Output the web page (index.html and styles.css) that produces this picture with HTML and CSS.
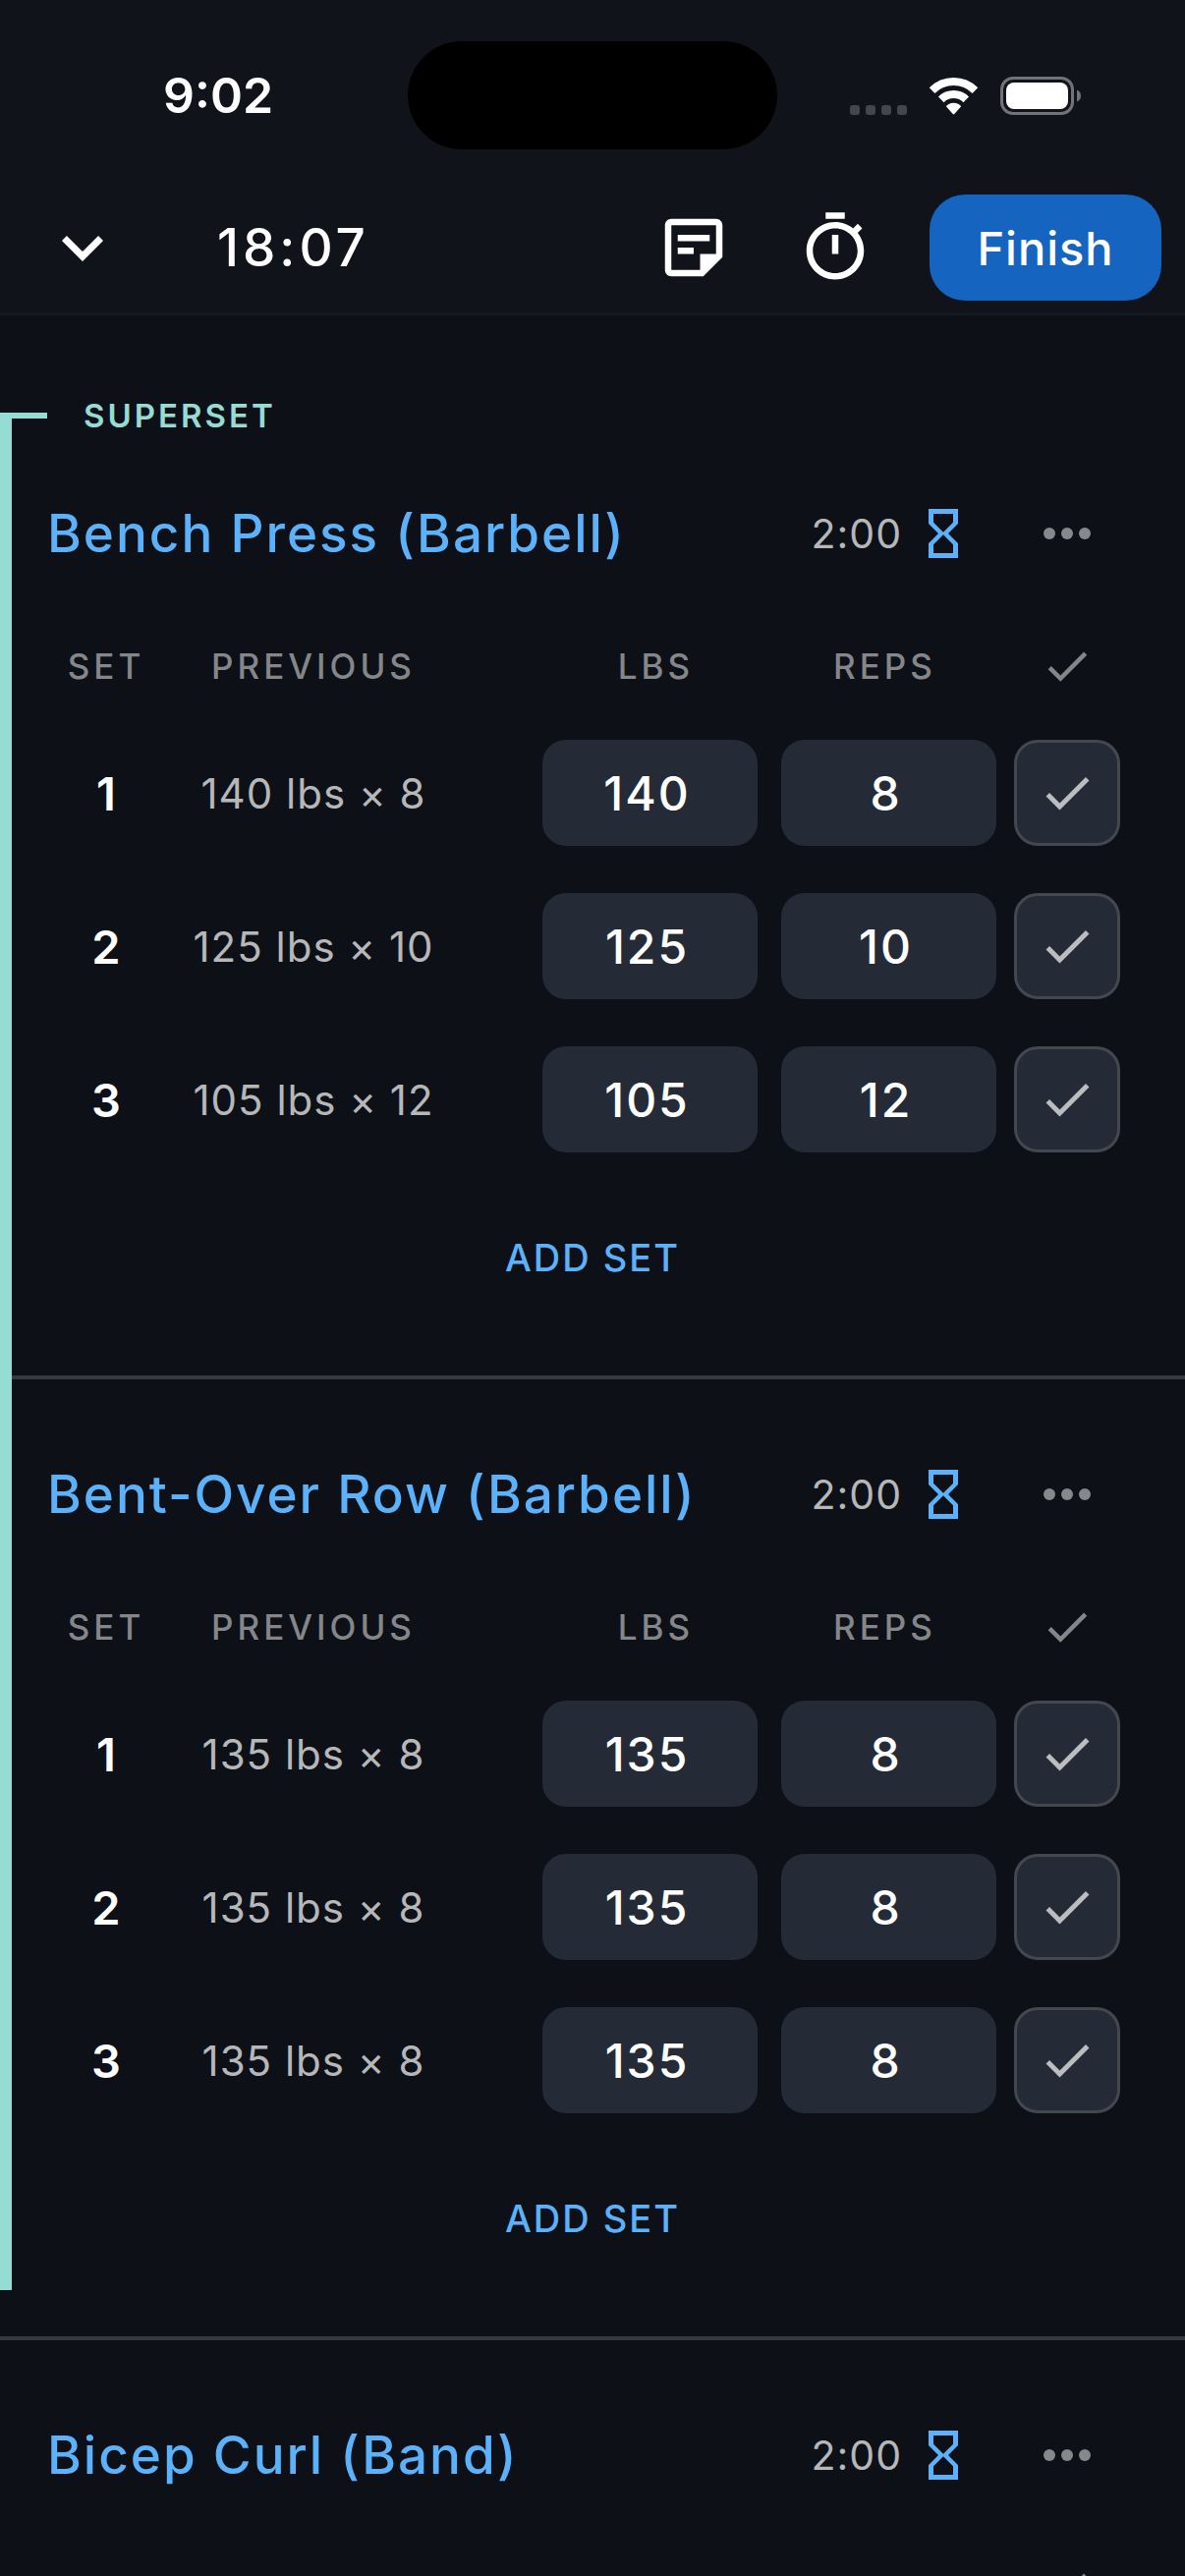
FILE: index.html
```html
<!doctype html>
<html lang="en">
  <head>
    <meta charset="utf-8">
    <title>Workout</title>
    <meta name="viewport" content="width=device-width">
    <link rel="stylesheet" href="styles.css">
  </head>
  <body>
    <svg class="defs" aria-hidden="true">
      <symbol id="check" viewBox="0 0 24 24"><path d="M9 16.17L4.83 12l-1.42 1.41L9 19 21 7l-1.41-1.41z"/></symbol>
      <symbol id="more" viewBox="0 0 24 24"><circle cx="6" cy="12" r="2"/><circle cx="12" cy="12" r="2"/><circle cx="18" cy="12" r="2"/></symbol>
      <symbol id="hourglass" viewBox="0 0 24 24"><path d="M6 2v6h.01L6 8.01 10 12l-4 4 .01.01H6V22h12v-5.99h-.01L18 16l-4-4 4-3.99-.01-.01H18V2H6zm10 14.5V20H8v-3.5l4-4 4 4zm-4-5l-4-4V4h8v3.5l-4 4z"/></symbol>
    </svg>
    <header>
      <div class="status">
        <span class="time">9:02</span>
        <div class="island"></div>
        <div class="indicators">
          <svg class="signal" viewBox="0 0 58 10"><rect width="10" height="10" rx="3"/><rect x="16" width="10" height="10" rx="3"/><rect x="32" width="10" height="10" rx="3"/><rect x="48" width="10" height="10" rx="3"/></svg>
          <svg class="wifi" viewBox="0 0 51 38">
            <path d="M3.6 13.1A31 31 0 0 1 47.4 13.1M12.8 22.3A18 18 0 0 1 38.2 22.3" fill="none" stroke="currentColor" stroke-width="8"/>
            <path d="M18 29.5Q18 28 20.500 27Q25.500 24.500 30.500 27Q33 28 33 29.500L26.500 36.700Q25.500 37.800 24.500 36.700z"/>
          </svg>
          <svg class="battery" viewBox="0 0 83 39">
            <rect x="1.500" y="1.500" width="72" height="36" rx="11.500" fill="none" stroke="#717377" stroke-width="3"/>
            <rect x="6" y="6" width="63" height="27" rx="8"/>
            <path d="M78 13.500Q82 15 82 19.500T78 25.500z" fill="#717377"/>
          </svg>
        </div>
      </div>
      <div class="toolbar">
        <button type="button" class="icon-btn" title="Minimize"><svg class="icon-lg" viewBox="0 0 24 24"><path d="M16.59 8.59L12 13.17 7.41 8.59 6 10l6 6 6-6z"/></svg></button>
        <span class="elapsed">18:07</span>
        <div class="actions">
          <button type="button" class="icon-btn" title="Notes"><svg class="icon-md" viewBox="0 0 24 24"><path d="M19 5v9h-5v5H5V5h14m0-2H5c-1.1 0-2 .9-2 2v14c0 1.1.9 2 2 2h10l6-6V5c0-1.1-.9-2-2-2zm-7 11H7v-2h5v2zm5-4H7V8h10v2z"/></svg></button>
          <button type="button" class="icon-btn" title="Rest timer"><svg class="icon-md" viewBox="0 0 24 24"><path d="M15 1H9v2h6V1zm-4 13h2V8h-2v6zm8.030-6.610l1.420-1.420c-.43-.51-.9-.99-1.410-1.410l-1.420 1.420C16.070 4.740 14.120 4 12 4c-4.970 0-9 4.030-9 9s4.020 9 9 9 9-4.030 9-9c0-2.120-.74-4.070-1.970-5.610zM12 20c-3.870 0-7-3.130-7-7s3.130-7 7-7 7 3.130 7 7-3.130 7-7 7z"/></svg></button>
        </div>
        <button type="button" class="finish">Finish</button>
      </div>
    </header>
    <main>
      <section class="superset">
        <div class="superset-label">SUPERSET</div>
        <article class="exercise">
          <div class="exercise-head">
            <h2>Bench Press (Barbell)</h2>
            <button type="button" class="rest">2:00 <svg><use href="#hourglass"/></svg></button>
            <button type="button" class="more" title="More"><svg><use href="#more"/></svg></button>
          </div>
          <table>
            <thead>
              <tr>
                <th class="set">SET</th>
                <th class="prev">PREVIOUS</th>
                <th class="lbs">LBS</th>
                <th class="reps">REPS</th>
                <th class="done"><svg><use href="#check"/></svg></th>
              </tr>
            </thead>
            <tbody>
              <tr>
                <td class="set">1</td>
                <td class="prev">140 lbs × 8</td>
                <td><input type="text" class="num" inputmode="numeric" aria-label="Set 1 lbs" value="140"></td>
                <td><input type="text" class="num" inputmode="numeric" aria-label="Set 1 reps" value="8"></td>
                <td class="done"><label class="tick"><input type="checkbox" aria-label="Set 1 done"><svg><use href="#check"/></svg></label></td>
              </tr>
              <tr>
                <td class="set">2</td>
                <td class="prev">125 lbs × 10</td>
                <td><input type="text" class="num" inputmode="numeric" aria-label="Set 2 lbs" value="125"></td>
                <td><input type="text" class="num" inputmode="numeric" aria-label="Set 2 reps" value="10"></td>
                <td class="done"><label class="tick"><input type="checkbox" aria-label="Set 2 done"><svg><use href="#check"/></svg></label></td>
              </tr>
              <tr>
                <td class="set">3</td>
                <td class="prev">105 lbs × 12</td>
                <td><input type="text" class="num" inputmode="numeric" aria-label="Set 3 lbs" value="105"></td>
                <td><input type="text" class="num" inputmode="numeric" aria-label="Set 3 reps" value="12"></td>
                <td class="done"><label class="tick"><input type="checkbox" aria-label="Set 3 done"><svg><use href="#check"/></svg></label></td>
              </tr>
            </tbody>
          </table>
          <button type="button" class="add-set">ADD SET</button>
        </article>
        <article class="exercise">
          <div class="exercise-head">
            <h2>Bent-Over Row (Barbell)</h2>
            <button type="button" class="rest">2:00 <svg><use href="#hourglass"/></svg></button>
            <button type="button" class="more" title="More"><svg><use href="#more"/></svg></button>
          </div>
          <table>
            <thead>
              <tr>
                <th class="set">SET</th>
                <th class="prev">PREVIOUS</th>
                <th class="lbs">LBS</th>
                <th class="reps">REPS</th>
                <th class="done"><svg><use href="#check"/></svg></th>
              </tr>
            </thead>
            <tbody>
              <tr>
                <td class="set">1</td>
                <td class="prev">135 lbs × 8</td>
                <td><input type="text" class="num" inputmode="numeric" aria-label="Set 1 lbs" value="135"></td>
                <td><input type="text" class="num" inputmode="numeric" aria-label="Set 1 reps" value="8"></td>
                <td class="done"><label class="tick"><input type="checkbox" aria-label="Set 1 done"><svg><use href="#check"/></svg></label></td>
              </tr>
              <tr>
                <td class="set">2</td>
                <td class="prev">135 lbs × 8</td>
                <td><input type="text" class="num" inputmode="numeric" aria-label="Set 2 lbs" value="135"></td>
                <td><input type="text" class="num" inputmode="numeric" aria-label="Set 2 reps" value="8"></td>
                <td class="done"><label class="tick"><input type="checkbox" aria-label="Set 2 done"><svg><use href="#check"/></svg></label></td>
              </tr>
              <tr>
                <td class="set">3</td>
                <td class="prev">135 lbs × 8</td>
                <td><input type="text" class="num" inputmode="numeric" aria-label="Set 3 lbs" value="135"></td>
                <td><input type="text" class="num" inputmode="numeric" aria-label="Set 3 reps" value="8"></td>
                <td class="done"><label class="tick"><input type="checkbox" aria-label="Set 3 done"><svg><use href="#check"/></svg></label></td>
              </tr>
            </tbody>
          </table>
          <button type="button" class="add-set">ADD SET</button>
        </article>
      </section>
      <article class="exercise">
        <div class="exercise-head">
          <h2>Bicep Curl (Band)</h2>
          <button type="button" class="rest">2:00 <svg><use href="#hourglass"/></svg></button>
          <button type="button" class="more" title="More"><svg><use href="#more"/></svg></button>
        </div>
        <table>
          <thead>
            <tr>
              <th class="set"></th>
              <th class="prev"></th>
              <th class="lbs"></th>
              <th class="reps"></th>
              <th class="done"><svg><use href="#check"/></svg></th>
            </tr>
          </thead>
        </table>
      </article>
    </main>
  </body>
</html>
```
FILE: styles.css
```css
:root {
  color-scheme: dark;
}
* {
  box-sizing: border-box;
}
body {
  margin: 0;
  height: 100vh;
  display: flex;
  flex-direction: column;
  overflow: hidden;
  background-color: #0d1017;
  color: white;
  font-family: "Inter", sans-serif;
}
svg {
  display: block;
  fill: currentColor;
}
.defs {
  display: none;
}
button {
  margin: 0;
  padding: 0;
  border: none;
  background-color: transparent;
  color: inherit;
  font-family: inherit;
}
header {
  flex: none;
  background-color: #10131a;
  border-bottom: 3px solid #151921;
}

/* status bar */
.status {
  display: grid;
  grid-template-columns: 1fr 376px 1fr;
  align-items: center;
  padding: 42px 0 40px;
}
.time {
  padding-left: 166px;
  font-size: 50px;
  font-weight: 600;
}
.island {
  height: 110px;
  border-radius: 55px;
  background-color: black;
}
.indicators {
  display: flex;
  align-items: flex-end;
  padding-left: 74px;
}
.signal {
  width: 58px;
  height: 10px;
  color: #43464b;
}
.wifi {
  width: 51px;
  height: 38px;
  margin: 0 22px;
}
.battery {
  width: 83px;
  height: 39px;
}

/* toolbar */
.toolbar {
  display: flex;
  align-items: center;
  height: 126px;
  padding: 0 24px 6px 42px;
}
.icon-lg {
  width: 84px;
  height: 84px;
}
.icon-md {
  width: 78px;
  height: 78px;
}
.elapsed {
  margin-left: 95px;
  font-size: 53px;
  font-weight: 500;
  letter-spacing: 4px;
}
.actions {
  display: flex;
  gap: 66px;
  margin: 0 57px 0 auto;
}
.finish {
  width: 236px;
  height: 108px;
  border-radius: 36px;
  background-color: #1565c0;
  font-size: 47px;
  font-weight: 500;
  letter-spacing: 1px;
}

main {
  flex: 1;
  overflow: hidden;
}

/* superset bracket */
.superset {
  position: relative;
}
.superset::before {
  content: "";
  position: absolute;
  top: 99px;
  bottom: 47px;
  left: 0;
  width: 12px;
  background-color: #95dcd4;
}
.superset-label {
  display: flex;
  align-items: center;
  gap: 37px;
  padding: 82px 0 16px;
  color: #95dcd4;
  font-size: 33px;
  font-weight: 600;
  line-height: 40px;
  letter-spacing: 3px;
}
.superset-label::before {
  content: "";
  width: 48px;
  height: 6px;
  background-color: #95dcd4;
}

/* exercise */
.exercise {
  padding: 33px 60px 38px 48px;
  border-top: 4px solid #36393e;
}
.superset-label + .exercise {
  padding-top: 0;
  border-top: none;
}
.exercise-head {
  display: flex;
  align-items: center;
  height: 168px;
}
h2 {
  margin: 0 auto 0 0;
  color: #5bb1fa;
  font-size: 53px;
  font-weight: 500;
  letter-spacing: 2px;
}
.rest {
  display: flex;
  align-items: center;
  gap: 12px;
  color: #b6b7b9;
  font-size: 41px;
  letter-spacing: 1px;
}
.rest svg {
  width: 60px;
  height: 60px;
  color: #5bb1fa;
}
.more {
  margin: 0 24px 0 60px;
  color: #87888b;
}
.more svg {
  width: 72px;
  height: 72px;
}
table {
  width: 100%;
  table-layout: fixed;
  border-collapse: collapse;
}
th {
  height: 102px;
  padding: 0;
  color: #858689;
  font-size: 35px;
  font-weight: 500;
  letter-spacing: 4px;
}
td {
  height: 156px;
  padding: 0 12px;
  text-align: center;
}
th.set,
th.done {
  width: 120px;
}
th.lbs {
  width: 243px;
  padding-left: 12px;
}
th.reps {
  width: 243px;
  padding-right: 8px;
}
th.prev,
td.prev {
  padding: 0 70px 0 0;
}
td.set {
  font-size: 47px;
  font-weight: 600;
}
td.prev {
  color: #b6b7b9;
  font-size: 42px;
  letter-spacing: 1px;
  white-space: nowrap;
}
th.done svg {
  width: 54px;
  height: 54px;
  margin: 0 auto;
}
td.done {
  padding: 0 6px;
}
.num {
  display: block;
  width: 100%;
  height: 108px;
  padding: 0 6px 0 0;
  border: none;
  border-radius: 24px;
  background-color: #252b36;
  color: white;
  font-family: inherit;
  font-size: 48px;
  font-weight: 500;
  letter-spacing: 2px;
  text-align: center;
}
.tick {
  display: grid;
  place-items: center;
  color: #bcbdc1;
}
.tick input,
.tick svg {
  grid-area: 1 / 1;
}
.tick input {
  appearance: none;
  width: 108px;
  height: 108px;
  margin: 0;
  border: 3px solid #44474e;
  border-radius: 24px;
  background-color: #252b36;
}
.tick input:checked {
  background-color: #1565c0;
}
.tick svg {
  width: 60px;
  height: 60px;
  pointer-events: none;
}
.add-set {
  display: block;
  height: 165px;
  /* centred on the screen, not on the padded column */
  margin: 0 auto;
  padding-left: 12px;
  color: #5bb1fa;
  font-size: 38px;
  font-weight: 500;
  letter-spacing: 2px;
}
```
